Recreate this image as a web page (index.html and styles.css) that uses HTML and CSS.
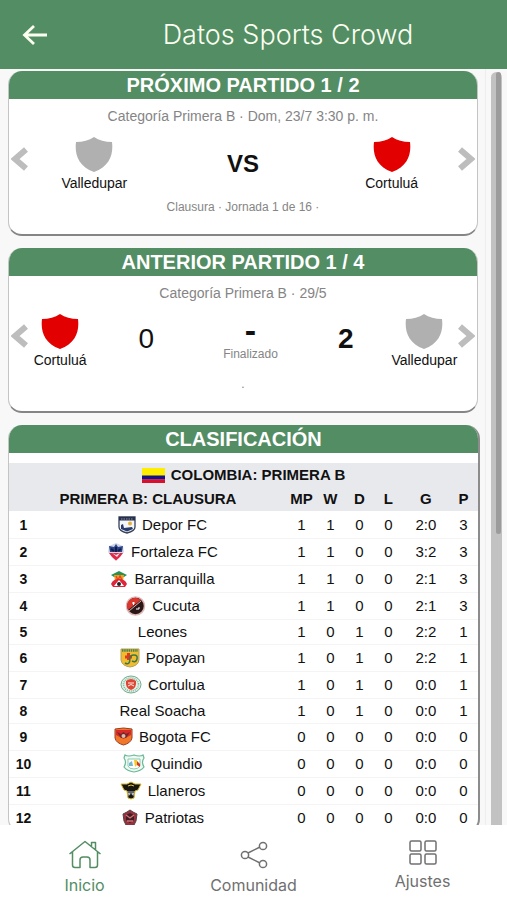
FILE: index.html
```html
<!DOCTYPE html>
<html lang="es">
<head>
<meta charset="utf-8">
<meta name="viewport" content="width=device-width, initial-scale=1">
<title>Datos Sports Crowd</title>
<link rel="stylesheet" href="styles.css">
</head>
<body>
<svg class="defs" aria-hidden="true">
  <symbol id="shield" viewBox="0 0 38 35"><path d="M19 0C14 3.500 8 5 1 5C-.5 17 3 29 19 35C35 29 38.500 17 37 5C30 5 24 3.500 19 0Z" fill="currentColor"/></symbol>
  <symbol id="chevron" viewBox="0 0 18 24"><path d="M15 2.500L4 12L15 21.500" fill="none" stroke="currentColor" stroke-width="6"/></symbol>
</svg>

<header class="topbar">
  <button class="back" type="button" aria-label="Volver">
    <svg width="26" height="22" viewBox="0 0 26 22"><path d="M12 2L2.500 11L12 20M3 11H25" fill="none" stroke="currentColor" stroke-width="2.800"/></svg>
  </button>
  <h1>Datos Sports Crowd</h1>
</header>

<div class="viewport">
  <main class="content">
    <section class="card">
      <h2>PRÓXIMO PARTIDO 1 / 2</h2>
      <p class="meta">Categoría Primera B · Dom, 23/7 3:30 p. m.</p>
      <div class="match upcoming">
        <div class="team grey"><svg class="shield"><use href="#shield"/></svg><span>Valledupar</span></div>
        <strong class="versus">VS</strong>
        <div class="team red"><svg class="shield"><use href="#shield"/></svg><span>Cortuluá</span></div>
        <button class="step prev" type="button" aria-label="Anterior"><svg><use href="#chevron"/></svg></button>
        <button class="step next" type="button" aria-label="Siguiente"><svg><use href="#chevron"/></svg></button>
      </div>
      <p class="round">Clausura · Jornada 1 de 16 ·</p>
    </section>

    <section class="card">
      <h2>ANTERIOR PARTIDO 1 / 4</h2>
      <p class="meta">Categoría Primera B · 29/5</p>
      <div class="match played">
        <div class="team red"><svg class="shield"><use href="#shield"/></svg><span>Cortuluá</span></div>
        <span class="score">0</span>
        <div class="status"><strong>-</strong><span>Finalizado</span></div>
        <span class="score winner">2</span>
        <div class="team grey"><svg class="shield"><use href="#shield"/></svg><span>Valledupar</span></div>
        <button class="step prev" type="button" aria-label="Anterior"><svg><use href="#chevron"/></svg></button>
        <button class="step next" type="button" aria-label="Siguiente"><svg><use href="#chevron"/></svg></button>
      </div>
      <p class="round">.</p>
    </section>

    <section class="card standings">
      <h2>CLASIFICACIÓN</h2>
      <table>
        <colgroup><col class="c-rank"><col><col class="c-num"><col class="c-num"><col class="c-num"><col class="c-num"><col class="c-goals"><col class="c-num"></colgroup>
        <thead>
          <tr><th colspan="8"><span class="club"><svg width="23" height="15" viewBox="0 0 23 15"><path fill="#fe0" d="M0 0h23v8H0z"/><path fill="#12128c" d="M0 7.500h23v4H0z"/><path fill="#d8102c" d="M0 11.300h23V15H0z"/></svg>COLOMBIA: PRIMERA B</span></th></tr>
          <tr><th colspan="2">PRIMERA B: CLAUSURA</th><th>MP</th><th>W</th><th>D</th><th>L</th><th>G</th><th>P</th></tr>
        </thead>
        <tbody>
          <tr><th>1</th><td><span class="club"><svg width="18" height="18" viewBox="0 0 18 18"><path d="M1 1H17V11Q17 15 9 17Q1 15 1 11Z" fill="#f4f6f8" stroke="#34405a" stroke-width="1.300"/><path d="M1 1H17V4.500H1Z" fill="#26304d"/><path d="M3 3H15" stroke="#aab" stroke-width=".8" stroke-dasharray="1.500 1"/><path d="M3 9L5 8L6 12L14 11L15 13L9 15.500L3 13Z" fill="#273b6c"/><circle cx="12" cy="7.500" r="2" fill="#e3b23b"/></svg>Depor FC</span></td><td>1</td><td>1</td><td>0</td><td>0</td><td>2:0</td><td>3</td></tr>
          <tr><th>2</th><td><span class="club"><svg width="18" height="20" viewBox="0 0 18 20"><path d="M2 4L9 1L16 4L17 10L9 19L1 10Z" fill="#cfd7e8"/><path d="M2 4L7 5L9 2L11 5L16 4L15 10H3Z" fill="#2c4386"/><path d="M4 7L7 9M14 7L11 9M9 5V10" stroke="#111c48" stroke-width="2"/><path d="M2 11H16L13 15L9 18.500L5 15Z" fill="#e22a48"/><path d="M5 11L9 13L13 11L10 15Z" fill="#f5e9ef"/></svg>Fortaleza FC</span></td><td>1</td><td>1</td><td>0</td><td>0</td><td>3:2</td><td>3</td></tr>
          <tr><th>3</th><td><span class="club"><svg width="18" height="18" viewBox="0 0 18 18"><path d="M1 5L9 1L17 5L14 7H4Z" fill="#269354"/><path d="M4 5H14L13 11H5Z" fill="#f49b20"/><path d="M6 6L8 10L10 6L12 10" fill="none" stroke="#df4b19" stroke-width="1.300"/><path d="M1 14Q3 9 9 9T17 14L15 17H3Z" fill="#dc263d"/><path d="M4 16L9 10L14 16Z" fill="#fff"/><circle cx="9" cy="14" r="2" fill="#242424"/></svg>Barranquilla</span></td><td>1</td><td>1</td><td>0</td><td>0</td><td>2:1</td><td>3</td></tr>
          <tr><th>4</th><td><span class="club"><svg width="21" height="20" viewBox="0 0 21 20"><circle cx="10.500" cy="10" r="9" fill="#2c1718" stroke="#dcb7b5" stroke-width="1.500"/><path d="M3 14A8.300 8.300 0 0 1 16 4Z" fill="#d9362e"/><path d="M4 15L16 5" stroke="#f3dcd9" stroke-width=".8"/><path d="M7 7H10M8.500 6V9M11 13H14V11" stroke="#fff" stroke-width="1" fill="none"/></svg>Cucuta</span></td><td>1</td><td>1</td><td>0</td><td>0</td><td>2:1</td><td>3</td></tr>
          <tr class="plain"><th>5</th><td>Leones</td><td>1</td><td>0</td><td>1</td><td>0</td><td>2:2</td><td>1</td></tr>
          <tr><th>6</th><td><span class="club"><svg width="20" height="20" viewBox="0 0 20 20"><path d="M1 1H19V12Q18 18 10 19Q2 18 1 12Z" fill="#f1bd2f" stroke="#b5a057"/><path d="M2 2.500H18" stroke="#4a834f" stroke-width="2.500" stroke-dasharray="1.500 .7"/><path d="M5 9H12M8.500 5V12" stroke="#dc3b23" stroke-width="3"/><path d="M5 15Q10 18 10 10Q10 7 14 7T17 11T12 13" fill="none" stroke="#39784b" stroke-width="1.500"/></svg>Popayan</span></td><td>1</td><td>0</td><td>1</td><td>0</td><td>2:2</td><td>1</td></tr>
          <tr><th>7</th><td><span class="club"><svg width="22" height="19" viewBox="0 0 22 19"><ellipse cx="11" cy="9.500" rx="10" ry="8.500" fill="#e2f1e8" stroke="#72ad8b"/><ellipse cx="11" cy="9.500" rx="7.500" ry="6.500" fill="none" stroke="#80b798" stroke-width="1.500" stroke-dasharray="1 1"/><path d="M6 6Q11 2 16 6Q17 13 11 15Q5 13 6 6Z" fill="#df4534"/><path d="M8 8H14M8 11Q11 8 14 11" fill="none" stroke="#fff1e6"/></svg>Cortulua</span></td><td>1</td><td>0</td><td>1</td><td>0</td><td>0:0</td><td>1</td></tr>
          <tr class="plain"><th>8</th><td>Real Soacha</td><td>1</td><td>0</td><td>1</td><td>0</td><td>0:0</td><td>1</td></tr>
          <tr><th>9</th><td><span class="club"><svg width="19" height="19" viewBox="0 0 19 19"><path d="M1 2L9.500 1L18 2V11Q17 16 9.500 18Q2 16 1 11Z" fill="#ef7928" stroke="#9d3b26"/><path d="M2 3H17V8L9.500 12L2 8Z" fill="#dc2928"/><path d="M3 5L7 7L9.500 5L12 7L16 5L12 11H7Z" fill="#6a282f"/><circle cx="9.500" cy="9" r="2" fill="#e4b9a9"/></svg>Bogota FC</span></td><td>0</td><td>0</td><td>0</td><td>0</td><td>0:0</td><td>0</td></tr>
          <tr><th>10</th><td><span class="club"><svg width="22" height="19" viewBox="0 0 22 19"><path d="M2 1Q5 3 11 1Q17 3 20 1L21 4Q18 8 21 13Q18 17 11 18Q4 17 1 13Q4 8 1 4Z" fill="#eff9f4" stroke="#69b895" stroke-width="1.200"/><path d="M5 5H17V12Q15 15 11 15Q6 15 5 12Z" fill="#fff" stroke="#8ccbb0"/><path d="M6 9L9 7L10 12H6Z" fill="#75b9cb"/><path d="M11 6H14V11L12 13Z" fill="#f2ca29"/><path d="M14 7L17 10V13L14 11Z" fill="#d8352b"/></svg>Quindio</span></td><td>0</td><td>0</td><td>0</td><td>0</td><td>0:0</td><td>0</td></tr>
          <tr><th>11</th><td><span class="club"><svg width="22" height="19" viewBox="0 0 22 19"><path d="M1 3L7 3L11 1L15 3L21 3L18 9L15 10L14 17L11 18L8 17L7 10L4 9Z" fill="#17150f" stroke="#d6b72e"/><path d="M8 5Q11 3 14 5" fill="none" stroke="#e8c638"/><path d="M7.500 10H14.500L13.500 15L11 13L8.500 15Z" fill="#b9b9bb"/><path d="M8 11H14M11 12V16" stroke="#111"/></svg>Llaneros</span></td><td>0</td><td>0</td><td>0</td><td>0</td><td>0:0</td><td>0</td></tr>
          <tr><th>12</th><td><span class="club"><svg width="18" height="18" viewBox="0 0 18 18"><path d="M9 1L12 3L16 5L15 12L13 16L9 17L5 16L3 12L2 5L6 3Z" fill="#96323e" stroke="#574047"/><path d="M5 6L9 4L13 6V11L9 14L5 11Z" fill="#421d28"/><path d="M5 6L9 9L13 6M6 12H12" stroke="#d07272" stroke-width="1.300" fill="none"/></svg>Patriotas</span></td><td>0</td><td>0</td><td>0</td><td>0</td><td>0:0</td><td>0</td></tr>
        </tbody>
      </table>
    </section>
  </main>
  <div class="scrollbar" aria-hidden="true"><div class="thumb"></div></div>
</div>

<nav class="tabs">
  <a class="active" href="#inicio"><svg width="34" height="29" viewBox="0 0 34 29"><path d="M1.500 14L17 1.500L32.500 14M4.500 12V25Q4.500 27.500 7 27.500H12V20Q12 17 15 17H19Q22 17 22 20V27.500H27Q29.500 27.500 29.500 25V12M23.500 6V2.500H27.500V9.500"/></svg><span>Inicio</span></a>
  <a href="#comunidad"><svg width="28" height="29" viewBox="0 0 28 29"><path d="M8 13L20 7M8 17L20 23"/><circle cx="5" cy="15" r="3.600"/><circle cx="23" cy="6" r="3.600"/><circle cx="23" cy="24" r="3.600"/></svg><span>Comunidad</span></a>
  <a href="#ajustes"><svg width="28" height="25" viewBox="0 0 28 25"><rect x="1" y="1" width="11" height="10" rx="1.500"/><rect x="16" y="1" width="11" height="10" rx="1.500"/><rect x="1" y="14" width="11" height="10" rx="1.500"/><rect x="16" y="14" width="11" height="10" rx="1.500"/></svg><span>Ajustes</span></a>
</nav>
</body>
</html>
```
FILE: styles.css
```css
* { box-sizing: border-box; }

body {
  margin: 0;
  height: 100vh;
  display: flex;
  flex-direction: column;
  overflow: hidden;
  background: #f8f8f8;
  color: #111;
  font-family: "Liberation Sans", Arial, sans-serif;
}

h1, h2, p { margin: 0; }
svg { display: block; }
.defs { position: absolute; width: 0; height: 0; }
button { padding: 0; border: 0; background: none; color: inherit; }

.topbar {
  flex: none;
  display: grid;
  grid-template-columns: 69px 1fr;
  align-items: center;
  height: 69px;
  background: #538d64;
  color: #fbfff0;
}
.back { justify-self: center; }
.topbar h1 {
  text-align: center;
  font: 300 27px/30px Inter, sans-serif;
}

.viewport {
  flex: 1;
  min-height: 0;
  display: flex;
  overflow: hidden;
}
.content {
  flex: 1;
  display: flex;
  flex-direction: column;
  gap: 12px;
  padding: 2px 7px 0 8px;
  border-right: 1px solid #eee;
}
.scrollbar {
  flex: none;
  width: 11px;
  margin: 3px 5px 0 5px;
  padding: 0 1px 0 5px;
  border-radius: 6px 6px 0 0;
  background: #c2c2c2;
}
.thumb { height: 462px; border-radius: 3px; background: #9c9c9c; }

.card {
  flex: none;
  overflow: hidden;
  border: 1px solid #c4c4c4;
  border-top: 0;
  border-bottom: 2px solid #858585;
  border-radius: 14px;
  background: #fff;
  text-align: center;
}
.card h2 {
  background: #538d64;
  color: #fff;
  font-size: 20px;
  line-height: 28px;
}
.meta {
  padding-top: 8px;
  color: #858585;
  font-size: 14px;
  line-height: 18px;
}
.match {
  position: relative;
  display: grid;
  padding-top: 12px;
}
.upcoming { grid-template-columns: repeat(3, 1fr); padding-right: 11px; padding-left: 11px; }
.played { grid-template-columns: 102fr 70fr 138fr 52fr 105fr; }
.team { display: flex; flex-direction: column; align-items: center; color: #b0b0b0; }
.team.red { color: #e30000; }
.team span { margin-top: 3px; color: #111; font-size: 14px; line-height: 16px; }
.shield { width: 38px; height: 35px; }
.versus { align-self: center; font-size: 24px; line-height: 28px; }
.score { padding-top: 9px; font-size: 28px; line-height: 32px; }
.winner { font-weight: 700; }
.status { display: flex; flex-direction: column; }
.status strong { font-size: 34px; line-height: 32px; }
.status span { color: #858585; font-size: 12px; line-height: 16px; }
.step { position: absolute; top: 22px; color: #bdbdbd; }
.step svg { width: 18px; height: 24px; }
.prev { left: 2px; }
.next { right: 2px; transform: scaleX(-1); }
.round {
  height: 43px;
  padding-top: 8px;
  color: #858585;
  font-size: 12px;
  line-height: 16px;
}

.standings { margin-right: -2px; border-right: 2px solid #8c8c8c; }
.standings table {
  width: 100%;
  margin-top: 10px;
  border-collapse: collapse;
  table-layout: fixed;
}
.c-rank, .c-num { width: 29px; }
.c-goals { width: 46px; }
th, td { padding: 0; height: 27px; font-size: 15px; line-height: 18px; }
thead th { height: 24px; background: #e8e9ed; }
tbody tr + tr { background: linear-gradient(#f4f4f4 1px, transparent 1px); }
tbody th { font-size: 14px; }
.plain th, .plain td { height: 25px; }
.club { display: flex; align-items: center; justify-content: center; gap: 6px; }

.tabs {
  flex: none;
  display: grid;
  grid-template-columns: repeat(3, 1fr);
  height: 75px;
  padding-top: 15px;
  background: #fff;
}
.tabs a {
  display: flex;
  flex-direction: column;
  align-items: center;
  gap: 6px;
  color: #707070;
  font: 400 16px/20px Inter, sans-serif;
  text-decoration: none;
}
.tabs svg { fill: none; stroke: currentColor; stroke-width: 1.5; stroke-linejoin: round; }
.tabs .active { color: #538d64; }
```
